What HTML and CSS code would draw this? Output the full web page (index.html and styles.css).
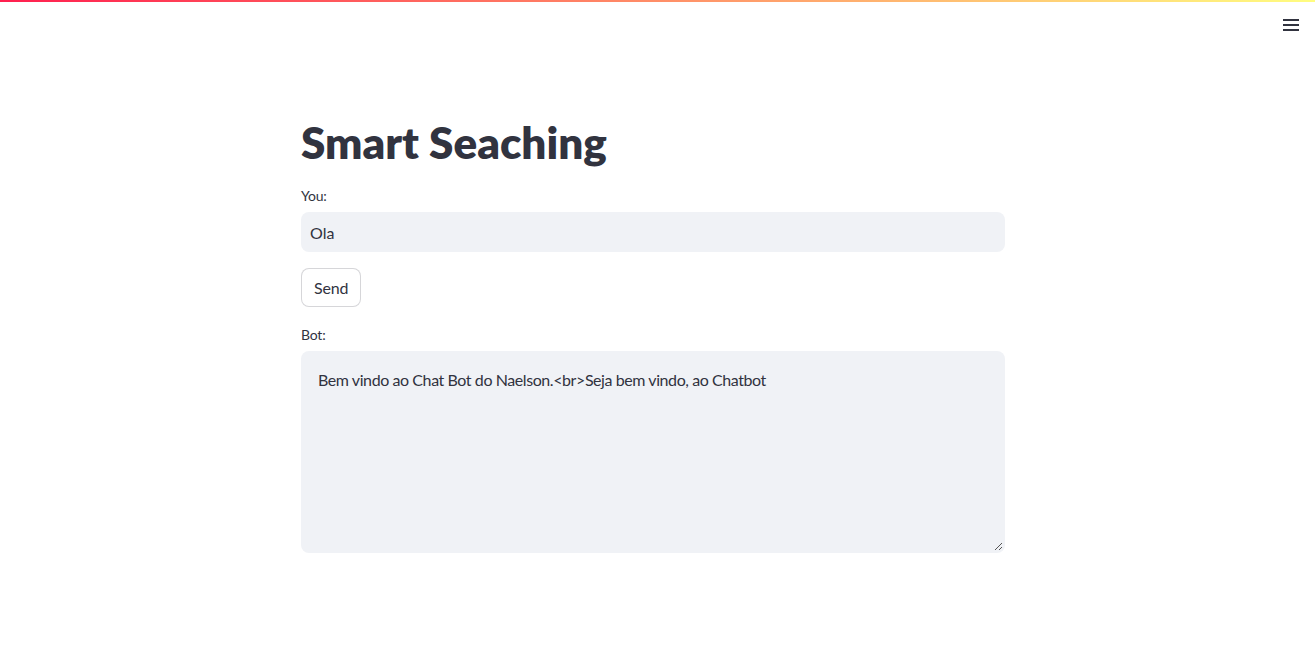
FILE: index.html
```html
<!DOCTYPE html>
<html>
<head>
<meta charset="utf-8">
<link rel="stylesheet" href="styles.css">
</head>
<body>
<div class="decoration"></div>
<header class="toolbar">
  <button class="menu-btn" aria-label="menu">
    <svg width="18" height="14" viewBox="0 0 18 14"><path d="M1 2h16M1 7h16M1 12h16" stroke="#31333f" stroke-width="2"/></svg>
  </button>
</header>
<main class="main">
  <div class="block">
    <h1 class="title">Smart Seaching</h1>
    <label class="label">You:</label>
    <div class="input">Ola</div>
    <button class="btn">Send</button>
    <label class="label">Bot:</label>
    <div class="textarea">Bem vindo ao Chat Bot do Naelson.&lt;br&gt;Seja bem vindo, ao Chatbot
      <svg class="grip" width="9" height="9" viewBox="0 0 9 9"><path d="M8 1L1 8M8 5L5 8" stroke="#555" stroke-width="1"/></svg>
    </div>
  </div>
</main>
</body>
</html>
```

FILE: styles.css
```css
html, body {
  margin: 0;
  padding: 0;
  background: #fff;
  font-family: Lato, "Noto Sans", sans-serif;
  color: #31333f;
}
.decoration {
  height: 2px;
  background: linear-gradient(90deg, #ff1f4f, #fffd80);
}
.toolbar {
  display: flex;
  justify-content: flex-end;
  height: 44px;
  padding-right: 14px;
}
.menu-btn {
  border: none;
  background: none;
  padding: 0;
  margin-top: 15px;
  width: 20px;
  height: 16px;
  display: flex;
  align-items: center;
  justify-content: center;
}
.main {
  display: flex;
  justify-content: center;
  padding-right: 9px;
}
.block {
  width: 704px;
  display: flex;
  flex-direction: column;
  align-items: flex-start;
  padding-top: 66px;
}
.title {
  margin: 0 0 14px 0;
  font-size: 44px;
  font-weight: 800;
  line-height: 60px;
  letter-spacing: 0;
}
.label {
  font-size: 14px;
  line-height: 20px;
  margin-bottom: 6px;
  letter-spacing: -0.2px;
}
.input {
  align-self: stretch;
  height: 40px;
  box-sizing: border-box;
  background: #f0f2f6;
  border-radius: 8px;
  padding: 0 9px;
  display: flex;
  align-items: center;
  font-size: 16px;
  margin-bottom: 16px;
}
.btn {
  font-family: inherit;
  color: #31333f;
  font-size: 16px;
  background: #fff;
  border: 1px solid rgba(49,51,63,0.2);
  border-radius: 8px;
  height: 39px;
  padding: 0 12px;
  margin-bottom: 18px;
  letter-spacing: -0.2px;
}
.textarea {
  position: relative;
  align-self: stretch;
  height: 202px;
  box-sizing: border-box;
  background: #f0f2f6;
  border-radius: 8px;
  padding: 17px 17px;
  font-size: 16px;
  line-height: 24px;
  letter-spacing: -0.42px;
}
.grip {
  position: absolute;
  right: 2px;
  bottom: 2px;
}
```
